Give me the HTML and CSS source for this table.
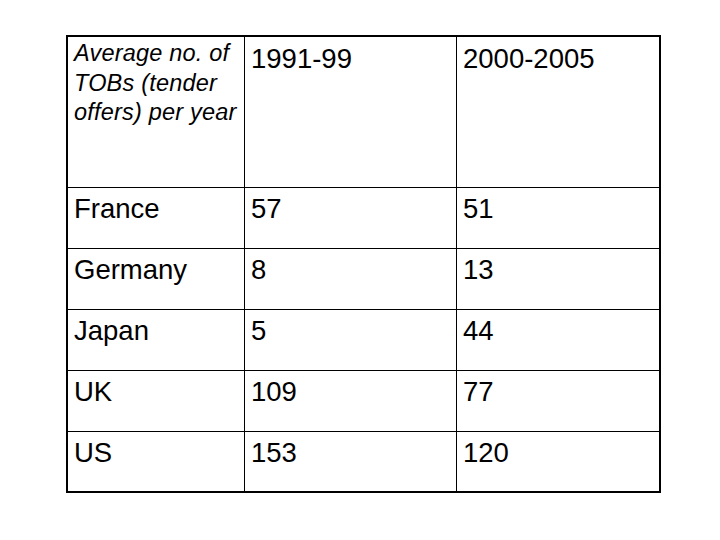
FILE: index.html
```html
<!DOCTYPE html>
<html>
<head>
<meta charset="utf-8">
<link rel="stylesheet" href="styles.css">
</head>
<body>
<div class="tbl">
  <div class="cell head note">Average no. of TOBs (tender offers) per year</div>
  <div class="cell head">1991-99</div>
  <div class="cell head last">2000-2005</div>

  <div class="cell">France</div>
  <div class="cell">57</div>
  <div class="cell last">51</div>

  <div class="cell">Germany</div>
  <div class="cell">8</div>
  <div class="cell last">13</div>

  <div class="cell">Japan</div>
  <div class="cell">5</div>
  <div class="cell last">44</div>

  <div class="cell">UK</div>
  <div class="cell">109</div>
  <div class="cell last">77</div>

  <div class="cell bottom">US</div>
  <div class="cell bottom">153</div>
  <div class="cell bottom last">120</div>
</div>
</body>
</html>
```
FILE: styles.css
```css
html, body {
  margin: 0;
  padding: 0;
  background: #ffffff;
}
body {
  font-family: "Liberation Sans", Arial, sans-serif;
  color: #000;
}
.tbl {
  margin: 35px 0 0 66px;
  width: 591px;
  border: 2px solid #000;
  display: grid;
  grid-template-columns: 177px 212px 202px;
  grid-template-rows: 151px 61px 61px 61px 61px 59px;
}
.cell {
  border-right: 1px solid #000;
  border-bottom: 1px solid #000;
  padding: 5px 0 0 6px;
  font-size: 27.5px;
  line-height: 32px;
}
.cell.head {
  padding-top: 6px;
}
.cell.last {
  border-right: none;
}
.cell.bottom {
  border-bottom: none;
}
.cell.note {
  font-style: italic;
  font-size: 23.5px;
  line-height: 29.5px;
  letter-spacing: 0.2px;
  padding: 2px 0 0 6px;
}
```
